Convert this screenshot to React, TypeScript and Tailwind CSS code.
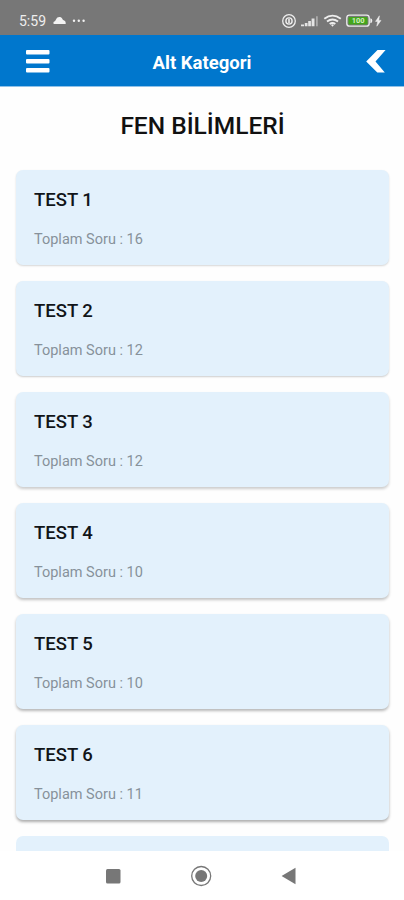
const tests = [
  { title: 'TEST 1', count: 16, shadow: 'shadow-[0_1px_2px_rgba(0,0,0,0.16)]' },
  { title: 'TEST 2', count: 12, shadow: 'shadow-[0_1px_2px_rgba(0,0,0,0.2)]' },
  { title: 'TEST 3', count: 12, shadow: 'shadow-[0_2px_3px_rgba(0,0,0,0.2)]' },
  { title: 'TEST 4', count: 10, shadow: 'shadow-[0_2px_3px_rgba(0,0,0,0.24)]' },
  { title: 'TEST 5', count: 10, shadow: 'shadow-[0_2px_3px_rgba(0,0,0,0.28)]' },
  { title: 'TEST 6', count: 11, shadow: 'shadow-[0_2px_3px_rgba(0,0,0,0.32)]' },
];

function StatusBar() {
  return (
    <div className="flex h-[35px] shrink-0 items-center bg-[#777777] pt-[7px] pl-[19px] text-[#eeeeee]">
      <span className="w-[34px] text-[14px] leading-none">5:59</span>
      <svg width="34" height="12" viewBox="0 0 34 12" fill="#f3f3f3">
        <path d="M1.2 9C0 9 0 6.6 1.8 6.2C3 5.7 3 2 6.4 2C9.2 2 9.3 4.6 10.2 5C12.6 5.7 12.8 7 12.7 9Z" />
        <circle cx="21" cy="5.8" r="1.2" />
        <circle cx="25.8" cy="5.8" r="1.2" />
        <circle cx="30.6" cy="5.8" r="1.2" />
      </svg>
      <svg className="ml-auto mr-[21px]" width="102" height="16" viewBox="0 0 102 16" fill="none">
        {/* Lock */}
        <circle cx="8" cy="8" r="6.3" stroke="#eeeeee" strokeWidth="1.3" />
        <circle cx="8" cy="8" r="3.1" stroke="#eeeeee" strokeWidth="1.4" />
        <path d="M7.2 6H8.8V10H7.2Z" fill="#eeeeee" />
        {/* Signal */}
        <path d="M20 13.3V11.6H23V13.3ZM23.8 13.3V10H26.5V13.3ZM27.2 13.3V8H29.9V13.3ZM30.6 13.3V5.5H33.5V13.3Z" fill="#e4e4e4" />
        <path d="M35 3.3H36.8V13.3H35Z" fill="#aaaaaa" />
        {/* Wifi */}
        <g stroke="#eeeeee" strokeWidth="1.9">
          <path d="M43.3 5.7Q51.5 -.5 59.8 5.7" />
          <path d="M46 8.5Q51.5 4.4 57 8.5" />
          <path d="M48.7 11Q51.5 8.9 54.3 11" />
        </g>
        <path d="M50 12L51.5 11.2L53 12L51.5 13.8Z" fill="#eeeeee" />
        {/* Battery */}
        <rect x="65.8" y="2.2" width="22.4" height="11" rx="2.7" stroke="#eeeeee" strokeWidth="1.3" />
        <path d="M89.3 5.2Q91.3 5.5 91.3 7.7Q91.3 10 89.3 10.3Z" fill="#eeeeee" />
        <rect x="67.5" y="3.9" width="19" height="7.6" rx="1.2" fill="#43a51c" />
        <text x="77.2" y="10.4" textAnchor="middle" fontSize="7.5" fontWeight="700" fill="#d3efc0">100</text>
        <path d="M98.4 2.8L94.5 8.4H96.7L95.8 13.2L100 7.4H97.8Z" fill="#eeeeee" stroke="#eeeeee" strokeWidth=".5" />
      </svg>
    </div>
  );
}

function Header() {
  return (
    <header className="flex h-[52px] shrink-0 items-center border-b border-[#8fc1e8] bg-[#0077cd] pt-[2px] pr-[17px] pl-[25px] text-white">
      <svg className="shrink-0" width="25" height="24" viewBox="0 0 25 24" fill="#ffffff">
        <rect x="1" y="0" width="23.5" height="4.4" rx="1" />
        <rect x="1" y="9" width="23.5" height="4.4" rx="1" />
        <rect x="1" y="18" width="23.5" height="4.4" rx="1" />
      </svg>
      <h1 className="flex-1 pt-[2px] pr-[11px] text-center text-[18.5px] leading-[22px] font-bold">Alt Kategori</h1>
      <svg className="shrink-0" width="22" height="24" viewBox="0 0 22 24" fill="#ffffff">
        <path d="M12.5 0H20.6L10.5 11.5L19.8 22.6H12.3L1.2 11.5Z" />
      </svg>
    </header>
  );
}

function NavBar() {
  return (
    <nav className="flex h-[49px] shrink-0 items-center justify-between bg-white px-[102px]">
      <svg width="22" height="22" viewBox="0 0 22 22">
        <rect x="4" y="4" width="14.5" height="14.5" rx="1.5" fill="#777777" />
      </svg>
      <svg width="22" height="22" viewBox="0 0 22 22">
        <circle cx="10.2" cy="11" r="9.5" fill="none" stroke="#777777" strokeWidth="1.3" />
        <circle cx="10.2" cy="11" r="6" fill="#777777" />
      </svg>
      <svg width="22" height="22" viewBox="0 0 22 22">
        <path d="M1.6 11L15.5 2.8V19.2Z" fill="#777777" />
      </svg>
    </nav>
  );
}

export default function App() {
  return (
    <div className="flex h-[900px] w-full flex-col overflow-hidden bg-white font-['Roboto',sans-serif]">
      <StatusBar />
      <Header />
      <main className="min-h-0 flex-1 overflow-hidden bg-[#fefefe] pr-[15px] pl-4">
        <h2 className="flex h-[83px] items-center justify-center pb-[5px] text-[24.5px] font-medium text-[#111111]">
          FEN BİLİMLERİ
        </h2>
        <div className="flex flex-col gap-4">
          {tests.map((test) => (
            <div key={test.title} className={`h-[95px] shrink-0 rounded-[7px] bg-[#e3f1fc] px-[18px] pt-[18px] ${test.shadow}`}>
              <h3 className="text-[18.5px] leading-[24px] font-medium text-[#111519]">{test.title}</h3>
              <p className="mt-[18px] text-[14.5px] leading-[20px] text-[#87919a]">Toplam Soru : {test.count}</p>
            </div>
          ))}
          {/* Next card, only its top edge is in view */}
          <div className="h-[15px] shrink-0 rounded-t-[7px] bg-[#e3f1fc]" />
        </div>
      </main>
      <NavBar />
    </div>
  );
}
